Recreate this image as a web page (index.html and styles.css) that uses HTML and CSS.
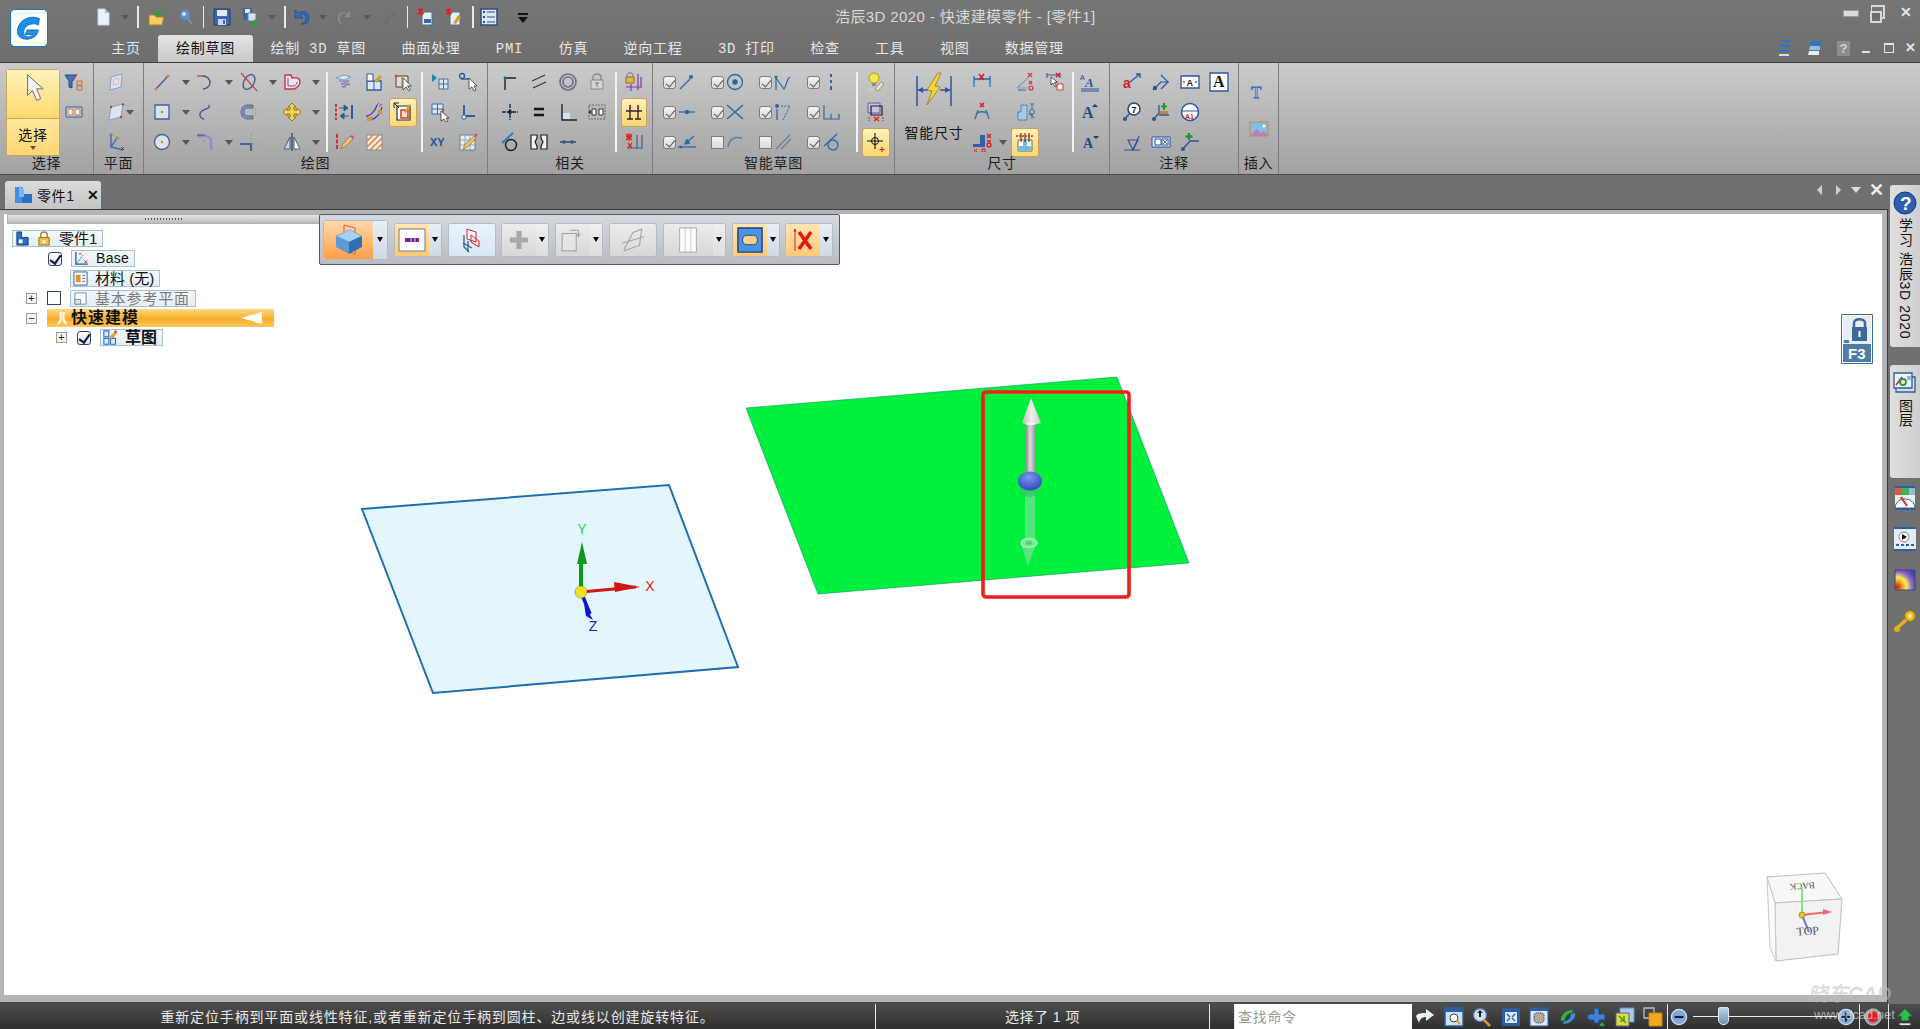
FILE: index.html
```html
<!DOCTYPE html>
<html lang="zh-CN">
<head>
<meta charset="utf-8">
<title>浩辰3D 2020 - 快速建模零件 - [零件1]</title>
<link rel="stylesheet" href="styles.css">
</head>
<body>
<svg class="sprite" xmlns="http://www.w3.org/2000/svg">
  <symbol id="doc" viewBox="0 0 20 20"><path d="M5 2h7l4 4v12H5z" fill="#eaf2fb" stroke="#c7d6e6"/><path d="M12 2v4h4" fill="#9fbcdc"/></symbol>
  <symbol id="open" viewBox="0 0 20 20"><path d="M2 8h6l1 2h8l-2 8H2z" fill="#f1cf62" stroke="#a98422"/><path d="M9 2l6 4-4 4V8H6V5h5z" fill="#2f9e3a"/></symbol>
  <symbol id="find" viewBox="0 0 20 20"><circle cx="10" cy="8" r="5" fill="#5d8fd0"/><circle cx="9" cy="7" r="2" fill="#cfe2f7"/><path d="M13 12l4 5" stroke="#8c8c8c" stroke-width="2"/></symbol>
  <symbol id="save" viewBox="0 0 20 20"><path d="M2 2h16v16H2z" fill="#3f66a8" stroke="#22406f"/><path d="M5 3h10v6H5z" fill="#dfe8f4"/><path d="M6 12h8v6H6z" fill="#c9d6e8"/><path d="M11 13h2v4h-2z" fill="#3f66a8"/></symbol>
  <symbol id="saveall" viewBox="0 0 20 20"><path d="M3 1h9v12H3z" fill="#3f66a8"/><path d="M5 2h5v4H5z" fill="#e3ebf6"/><path d="M8 6h8v8H8z" fill="#d8e2ef" stroke="#6d7f99"/><path d="M9 15h5v-3l5 4-5 4v-3H9z" fill="#2f9e3a"/></symbol>
  <symbol id="undo" viewBox="0 0 20 20"><path d="M4 3v8h8L9 8c3-2 6 0 6 3 0 3-2 5-5 6 5 1 8-2 8-6 0-6-6-8-10-5z" fill="#2f6dc4" stroke="#173f7d" stroke-width=".6"/></symbol>
  <symbol id="redo" viewBox="0 0 20 20"><path d="M16 3v8H8l3-3c-3-2-6 0-6 3 0 3 2 5 5 6-5 1-8-2-8-6 0-6 6-8 10-5z" fill="#8a8a8a" stroke="#636363" stroke-width=".6"/></symbol>
  <symbol id="rep" viewBox="0 0 20 20"><path d="M4 17l4-8 3 3-3 5zM11 9l4-6 2 2-3 7z" fill="#6f6f6f"/></symbol>
  <symbol id="star1" viewBox="0 0 20 20"><path d="M8 5h8v13H6V9z" fill="#e8eff7" stroke="#4b6f9e"/><path d="M8 12h7v4H8z" fill="#3f66a8"/><path d="M2 2l5 5M7 2L2 7M4.500 1v7" stroke="#e21d1d" stroke-width="1.400"/></symbol>
  <symbol id="star2" viewBox="0 0 20 20"><path d="M8 5h8v13H6V9z" fill="#e8eff7" stroke="#4b6f9e"/><path d="M9 16l5-8 3 2-5 7z" fill="#d9a21e"/><path d="M2 2l5 5M7 2L2 7M4.500 1v7" stroke="#e21d1d" stroke-width="1.400"/></symbol>
  <symbol id="list" viewBox="0 0 20 20"><path d="M2 2h16v16H2z" fill="#dce8f4" stroke="#2b517f" stroke-width="1.500"/><path d="M8 5h8M8 10h8M8 15h8" stroke="#2b517f"/><path d="M4 4h2v2H4zM4 9h2v2H4zM4 14h2v2H4z" fill="#2b517f"/></symbol>
  <symbol id="filter" viewBox="0 0 20 20"><path d="M1 3h11L8 9v7l-3-1V9z" fill="#3b78c4" stroke="#214c83"/><path d="M13 2l-4 7" stroke="#d33" stroke-width="1.200"/><path d="M13 9h5v4h-5zM13 14h5v4h-5z" fill="none" stroke="#c66d2a"/></symbol>
  <symbol id="grp" viewBox="0 0 20 20"><path d="M2 5h16v10H2z" fill="#c7d7ea" stroke="#2c5c9b"/><path d="M4 7h5v6H4zM11 7h5v6h-5z" fill="#f6f6f6" stroke="#d76f2e"/></symbol>
  <symbol id="pl1" viewBox="0 0 20 20"><path d="M5 5l11-3-1 13-11 3z" fill="#dbe4f0" stroke="#7ea1cc"/><path d="M8 7l5-1-1 6-5 1z" fill="none" stroke="#d9b8a8"/></symbol>
  <symbol id="pl2" viewBox="0 0 20 20"><path d="M5 5l12-3-2 13-12 3z" fill="#dbe4f0" stroke="#7ea1cc"/><circle cx="5" cy="5" r="1.300" fill="#d33"/><circle cx="17" cy="2.500" r="1.300" fill="#d33"/><circle cx="15" cy="15" r="1.300" fill="#d33"/></symbol>
  <symbol id="pl3" viewBox="0 0 20 20"><path d="M5 2v13l12 3M5 15l6-9" fill="none" stroke="#3f66a8" stroke-width="1.300"/><path d="M10 4l4 3M3 4l2-3 2 3" fill="none" stroke="#b9882e"/><path d="M15 15l3 3M18 15l-3 3" stroke="#444"/></symbol>
  <symbol id="line" viewBox="0 0 20 20"><path d="M4 17L16 4" stroke="#4c5f95" stroke-width="1.400"/><circle cx="4" cy="17" r="1.600" fill="#d58a37"/><circle cx="16" cy="4" r="1.600" fill="#d58a37"/></symbol>
  <symbol id="arc" viewBox="0 0 20 20"><path d="M2 4h6c4 0 7 3 7 6.500S12 17 8 17" fill="none" stroke="#4f4f8f" stroke-width="1.400"/><path d="M2 4h5" stroke="#d58a37" stroke-width="1.400"/></symbol>
  <symbol id="xc" viewBox="0 0 20 20"><ellipse cx="10" cy="10" rx="5" ry="8" transform="rotate(30 10 10)" fill="none" stroke="#4e5f9f" stroke-width="1.500"/><path d="M2 1l16 18" stroke="#db3a3a" stroke-width="1.200"/></symbol>
  <symbol id="heart" viewBox="0 0 20 20"><path d="M3 3h6l1 3c4-1 8 0 8 4 0 3-3 6-6 7H3z" fill="#f6dfe5" stroke="#c9344a" stroke-width="1.400"/><path d="M6 6v8h6c2-1 3-2 3-4" fill="none" stroke="#4e5f9f"/></symbol>
  <symbol id="rect" viewBox="0 0 20 20"><path d="M3 3h14v14H3z" fill="#dbe3ef" stroke="#3f5fa0" stroke-width="1.300"/><circle cx="10" cy="10" r="1.300" fill="#d58a37"/></symbol>
  <symbol id="curve" viewBox="0 0 20 20"><path d="M14 3c2 5-8 3-9 9-.5 3 2 5 4 5" fill="none" stroke="#4f4f8f" stroke-width="1.400"/></symbol>
  <symbol id="cs" viewBox="0 0 20 20"><path d="M14 3H8C5 3 2 6 2 10s3 7 6 7h6v-3H8c-2 0-3-2-3-4s1-4 3-4h6z" fill="#7e8fb8" stroke="#46557f" stroke-width=".7"/><path d="M13 7h4M17 7v6M13 13h4" stroke="#999" stroke-dasharray="1.500 1.500"/></symbol>
  <symbol id="move" viewBox="0 0 20 20"><path d="M10 1l4 4h-2v3h3V6l4 4-4 4v-2h-3v3h2l-4 4-4-4h2v-3H5v2l-4-4 4-4v2h3V5H6z" fill="#f5d33c" stroke="#79622a" stroke-width=".8"/></symbol>
  <symbol id="circ" viewBox="0 0 20 20"><circle cx="10" cy="10" r="7.500" fill="#dbe3ef" stroke="#4c5f95" stroke-width="1.300"/><circle cx="10" cy="10" r="1.300" fill="#d58a37"/></symbol>
  <symbol id="fil" viewBox="0 0 20 20"><path d="M2 4h8c4 0 6 3 6 6v8" fill="none" stroke="#8d8bd6" stroke-width="2.600"/><path d="M2 3h8" stroke="#4f4f8f"/><circle cx="9" cy="9" r="1" fill="#d58a37"/></symbol>
  <symbol id="trim" viewBox="0 0 20 20"><path d="M1 12h11v7" fill="none" stroke="#4f5f9a" stroke-width="2.200"/><path d="M12 2v8M14 12h5" stroke="#9a9a9a" stroke-width="1.500" stroke-dasharray="2 1.500"/></symbol>
  <symbol id="mirror" viewBox="0 0 20 20"><path d="M8 5L2 17h6z" fill="#c6d6ec" stroke="#3f5f9a"/><path d="M12 5l6 12h-6z" fill="#fff" stroke="#3f5f9a"/><path d="M10 1v18" stroke="#222"/></symbol>
  <symbol id="wave" viewBox="0 0 20 20"><path d="M2 6l8-3 7 2-7 3z" fill="#dfe9f3" stroke="#79a2c8"/><path d="M5 9h10l-8 3h9l-8 3h4" fill="none" stroke="#8e6fc0"/></symbol>
  <symbol id="paint" viewBox="0 0 20 20"><path d="M3 9h14v9H3z" fill="#dce9f6" stroke="#2c5c9b" stroke-width="1.300"/><path d="M3 2h6v7H3z" fill="#fff" stroke="#2c5c9b"/><path d="M10 9l6-6 2 2-5 6z" fill="#d89b31"/><path d="M10 9v9" stroke="#2c5c9b"/></symbol>
  <symbol id="cur1" viewBox="0 0 20 20"><path d="M3 4h12v11H3z" fill="#e8d9c8" stroke="#444"/><circle cx="3" cy="4" r="1.200" fill="#d33"/><path d="M9 4v11" stroke="#888"/><path d="M10 6v12l3-3 3 4 1.500-1-3-4h4z" fill="#fff" stroke="#222" stroke-width=".7"/></symbol>
  <symbol id="spl" viewBox="0 0 20 20"><path d="M2 2v16" stroke="#d22" stroke-width="1.800" stroke-dasharray="3 1.500"/><path d="M18 3v14" stroke="#2c5c9b" stroke-width="2"/><path d="M5 6h5M10 3l4 3-4 3zM15 14h-5M10 11l-4 3 4 3z" fill="#2c5c9b" stroke="#2c5c9b"/></symbol>
  <symbol id="offs" viewBox="0 0 20 20"><path d="M2 14c4 0 9-4 11-11M6 18c5-1 10-5 12-13" fill="none" stroke="#3a46b0" stroke-width="1.300"/><path d="M3 15h5v4H3zM14 8h4v4h-4z" fill="#d8932b"/><path d="M13 3l2-2M15 4l3-2" stroke="#d33"/></symbol>
  <symbol id="snap" viewBox="0 0 20 20"><path d="M4 4h13v14H4z" fill="#fff" stroke="#2b2b2b" stroke-width="1.200"/><path d="M8 8h7v8H8z" fill="#f7e5b8" stroke="#c63a3a" stroke-width="1.500"/><path d="M1 1l5 5M6 1H1v5" fill="none" stroke="#222"/><path d="M11 10l5-8 2 1-5 8z" fill="#d99f22"/></symbol>
  <symbol id="pen" viewBox="0 0 20 20"><path d="M3 2v16" stroke="#d22" stroke-width="1.800" stroke-dasharray="4 1.500"/><path d="M7 17l2-5 7-8 3 3-7 7z" fill="#f0c36a" stroke="#8a6c2c" stroke-width=".7"/><path d="M16 4l3 3 1-2-2-2z" fill="#e8438f"/></symbol>
  <symbol id="hatch" viewBox="0 0 20 20"><path d="M3 3h15v15H3z" fill="#f5e8d8" stroke="#8a8a96"/><path d="M3 9l6-6M3 15L15 3M6 18L18 6M12 18l6-6" stroke="#d8773e" stroke-width="1.200"/></symbol>
  <symbol id="tri" viewBox="0 0 20 20"><path d="M2 2l5 4-5 4z" fill="#1e87a8"/><path d="M9 7h9v10H9z" fill="#dbe8f3" stroke="#3d6ea6"/><path d="M13.500 7v10M9 12h9" stroke="#3d6ea6"/></symbol>
  <symbol id="ncur" viewBox="0 0 20 20"><circle cx="4" cy="4" r="2.500" fill="none" stroke="#2c5c9b" stroke-width="1.300"/><path d="M3 7h9" stroke="#2c5c9b" stroke-width="1.500"/><path d="M11 6v11l3-2 2 4 2-1-2-4h3z" fill="#fff" stroke="#222" stroke-width=".7"/></symbol>
  <symbol id="gcur" viewBox="0 0 20 20"><path d="M2 2h11v10H2z" fill="#dbe8f3" stroke="#3d6ea6"/><path d="M7.500 2v10M2 7h11" stroke="#3d6ea6"/><circle cx="13" cy="8" r="1.200" fill="#d33"/><path d="M11 9v10l3-2 2 3 2-1-2-3h3z" fill="#fff" stroke="#222" stroke-width=".7"/></symbol>
  <symbol id="ang" viewBox="0 0 20 20"><path d="M6 3v11h11" fill="none" stroke="#2c5c9b" stroke-width="1.800"/><circle cx="6" cy="15" r="2.200" fill="#dfe9f5" stroke="#2c5c9b"/></symbol>
  <symbol id="tbl" viewBox="0 0 20 20"><path d="M2 3h15v15H2z" fill="#e5eef8" stroke="#667c9c"/><path d="M2 8h15M2 13h15M7 3v15M12 3v15" stroke="#8fa6c3"/><path d="M5 17l2-5 9-8 2 2-8 9z" fill="#e9c060" stroke="#7d6427" stroke-width=".6"/><circle cx="18" cy="3" r="1.500" fill="#e8438f"/></symbol>
  <symbol id="corner" viewBox="0 0 20 20"><path d="M5 18V6h11" fill="none" stroke="#1f1f2b" stroke-width="1.400"/><circle cx="5" cy="6" r="1.400" fill="#2c5c9b"/></symbol>
  <symbol id="par" viewBox="0 0 20 20"><path d="M3 9l13-6M4 16l13-6" stroke="#35353d" stroke-width="1.200"/></symbol>
  <symbol id="conc" viewBox="0 0 20 20"><circle cx="10" cy="10" r="8" fill="none" stroke="#66707e" stroke-width="1.600"/><circle cx="10" cy="10" r="5" fill="none" stroke="#66707e" stroke-width="1.600"/></symbol>
  <symbol id="lock" viewBox="0 0 20 20"><path d="M6 8V5c0-4 8-4 8 0v3" fill="none" stroke="#8a8a8a" stroke-width="1.300"/><path d="M4 8h12v9H4z" fill="#d4d4d4" stroke="#8a8a8a"/><path d="M8 11h4M10 11v4" stroke="#777"/></symbol>
  <symbol id="lk2" viewBox="0 0 20 20"><path d="M3 5V3c0-3 6-3 6 0v2" fill="none" stroke="#7a7a7a"/><path d="M2 5h8v6H2z" fill="#e0b83b" stroke="#8a6c2c"/><path d="M14 2v16M2 15h16M17 5v10M7 12v7" stroke="#7d3ca5" stroke-width="1.200"/></symbol>
  <symbol id="cross" viewBox="0 0 20 20"><path d="M10 2v16M2 10h16" stroke="#14233e" stroke-width="1.300" stroke-dasharray="4 1"/><circle cx="10" cy="10" r="2" fill="#14233e"/></symbol>
  <symbol id="eq" viewBox="0 0 20 20"><path d="M5 7h10M5 13h10" stroke="#15151a" stroke-width="2.300"/></symbol>
  <symbol id="perp" viewBox="0 0 20 20"><path d="M4 2v16h15" fill="none" stroke="#22222a" stroke-width="1.400"/><path d="M5 11h7v6H5z" fill="#cfe4f5"/></symbol>
  <symbol id="grpb" viewBox="0 0 20 20"><path d="M2 3h16v14H2z" fill="#b8b8b8" stroke="#666" stroke-dasharray="2 1"/><path d="M5 7h4v6H5zM12 7h4v6h-4z" fill="#fff" stroke="#333"/><circle cx="3" cy="10" r="1.500" fill="#333"/></symbol>
  <symbol id="tan" viewBox="0 0 20 20"><circle cx="11" cy="13" r="5.500" fill="none" stroke="#1c1c22" stroke-width="1.400"/><path d="M2 11L13 1" stroke="#2c76c7" stroke-width="1.700"/></symbol>
  <symbol id="sym" viewBox="0 0 20 20"><path d="M2 3h6v3L6 10l2 4v3H2zM18 3h-6v3l2 4-2 4v3h6z" fill="#f2f2f2" stroke="#1f1f2b" stroke-width="1.200"/></symbol>
  <symbol id="dist" viewBox="0 0 20 20"><path d="M2 10h16" stroke="#1f2b4d" stroke-width="1.200"/><circle cx="6" cy="10" r="1.800" fill="#2c5c9b"/><circle cx="14" cy="10" r="1.800" fill="#2c5c9b"/></symbol>
  <symbol id="vv" viewBox="0 0 20 20"><path d="M6 3v14M14 3v14M2 9h8M10 9h8M3 17h6M11 17h6" stroke="#30253a" stroke-width="1.400"/><path d="M6 3v4M14 3v4" stroke="#d22" stroke-width="1.600"/></symbol>
  <symbol id="vv3" viewBox="0 0 20 20"><path d="M2 2l6 6M8 2l-6 6M2 4.500h6M5 1v8" stroke="#e21d1d" stroke-width="1.300"/><path d="M13 3v14M18 3v14M3 16h15" stroke="#3b5fa0" stroke-width="1.200"/><path d="M4 11l4 5M8 11l-4 5" stroke="#d22" stroke-width="1.300"/></symbol>
  <symbol id="l1" viewBox="0 0 20 20"><path d="M3 17L13 7" stroke="#2b67a8" stroke-width="1.300"/><circle cx="14" cy="5" r="2" fill="#2b67a8"/></symbol>
  <symbol id="l2" viewBox="0 0 20 20"><circle cx="10" cy="10" r="7.500" fill="none" stroke="#2b67a8" stroke-width="1.300"/><circle cx="10" cy="10" r="2.700" fill="#2b67a8"/></symbol>
  <symbol id="l3" viewBox="0 0 20 20"><path d="M3 18V6l8 11c4-6 2-10 6-12" fill="none" stroke="#2b67a8" stroke-width="1.200"/><circle cx="3" cy="5" r="1.500" fill="#2b67a8"/></symbol>
  <symbol id="l4" viewBox="0 0 20 20"><path d="M10 2v3M10 8v3M10 14v4" stroke="#2b67a8" stroke-width="2"/></symbol>
  <symbol id="l5" viewBox="0 0 20 20"><path d="M2 10h16" stroke="#2b67a8" stroke-width="1.300"/><circle cx="10" cy="10" r="2.200" fill="#2b67a8"/></symbol>
  <symbol id="l6" viewBox="0 0 20 20"><path d="M2 3l16 14M18 3L2 17" stroke="#2b67a8" stroke-width="1.500"/></symbol>
  <symbol id="l7" viewBox="0 0 20 20"><path d="M4 18V7" stroke="#2b67a8" stroke-width="1.300"/><circle cx="4" cy="4" r="2" fill="#2b67a8"/><path d="M8 4h9l-7 14" fill="none" stroke="#2b67a8" stroke-dasharray="2 1.300"/></symbol>
  <symbol id="l8" viewBox="0 0 20 20"><path d="M3 3v14h15v-5M10 17v-5" fill="none" stroke="#2b67a8" stroke-width="1.200"/></symbol>
  <symbol id="l9" viewBox="0 0 20 20"><path d="M1 15h18" stroke="#2b67a8" stroke-width="1.300"/><path d="M17 4l-9 8M13 11l-5 1 2-5" fill="#2b67a8" stroke="#2b67a8" stroke-width="1.300"/><circle cx="4" cy="15" r="1.500" fill="#2b67a8"/></symbol>
  <symbol id="l10" viewBox="0 0 20 20"><path d="M3 15c1-8 7-11 14-9" fill="none" stroke="#5a7fa8" stroke-width="1.500"/></symbol>
  <symbol id="l11" viewBox="0 0 20 20"><path d="M3 17L17 3M8 17L18 7" stroke="#6f7f92" stroke-width="1.200"/></symbol>
  <symbol id="l12" viewBox="0 0 20 20"><circle cx="12" cy="13" r="5" fill="none" stroke="#2b67a8" stroke-width="1.300"/><path d="M3 14L16 2" stroke="#2b67a8" stroke-width="1.300"/></symbol>
  <symbol id="bulb" viewBox="0 0 20 20"><circle cx="8" cy="6" r="5" fill="#f4e842" stroke="#b59e20"/><path d="M6 11h4v3H6z" fill="#8c8c8c"/><path d="M9 17l6-7 3 2-6 7z" fill="#e9e2c0" stroke="#777" stroke-width=".7"/><path d="M2 16h6v3H2z" fill="#c8c8c8"/></symbol>
  <symbol id="rbox" viewBox="0 0 20 20"><path d="M2 1h12v10H2z" fill="#c9c3df" stroke="#6a4fae"/><path d="M5 4h11v9H5z" fill="none" stroke="#222" stroke-width="1.200"/><path d="M8 15l5 4M13 15l-5 4" stroke="#d22" stroke-width="1.500"/><path d="M3 15v4M17 15v4" stroke="#d22" stroke-dasharray="2 1"/></symbol>
  <symbol id="tgt" viewBox="0 0 20 20"><circle cx="9" cy="9" r="3.500" fill="none" stroke="#111"/><path d="M9 1v16M1 9h16" stroke="#111" stroke-width="1.100"/><path d="M16 15v5M13.500 17.500h5" stroke="#d22" stroke-width="1.200"/></symbol>
  <symbol id="smart" viewBox="0 0 40 36"><path d="M3 4v30M37 4v30M4 18h10M26 18h10" stroke="#2b5799" stroke-width="1.500"/><path d="M4 18l5-3v6zM36 18l-5-3v6z" fill="#2b5799"/><path d="M24 1L13 18l5 1-5 14 13-18-5-1 6-13z" fill="#f3d53d" stroke="#a68b1b"/></symbol>
  <symbol id="d1" viewBox="0 0 20 20"><path d="M2 4v11M18 4v11M2 7h16" stroke="#2b67a8" stroke-width="1.300"/><path d="M7 2l5 6M12 2L7 8" stroke="#e01c1c" stroke-width="1.700"/><path d="M2 12v3M18 12v3" stroke="#38a3e0" stroke-width="2"/></symbol>
  <symbol id="d2" viewBox="0 0 20 20"><path d="M2 16L14 5M2 16h10" stroke="#a08ec0" stroke-width="1.100"/><path d="M13 1l4 4M17 1l-4 4M14 9l3 3M17 9l-3 3" stroke="#d33" stroke-width="1.100"/><circle cx="16" cy="16" r="2" fill="none" stroke="#d33" stroke-width="1.200"/><path d="M3 18h8" stroke="#2b67a8"/></symbol>
  <symbol id="d3" viewBox="0 0 20 20"><path d="M2 3h13M2 1v5M15 1v5" stroke="#2c5c9b"/><path d="M6 5v8l2-2 2 4 1.500-.7-2-4h3z" fill="#fff" stroke="#222" stroke-width=".7"/><path d="M11 1l4 4M15 1l-4 4" stroke="#e01c1c" stroke-width="1.500"/><path d="M12 12h6v6h-6z" fill="#fff" stroke="#d33"/></symbol>
  <symbol id="d4" viewBox="0 0 20 20"><path d="M8 1l4 4M12 1L8 5" stroke="#e01c1c" stroke-width="1.600"/><path d="M3 17L6 8M17 17l-3-9M4 12c3-3 9-3 12 0" fill="none" stroke="#3c6ea8" stroke-width="1.300"/></symbol>
  <symbol id="d5" viewBox="0 0 20 20"><path d="M3 10h3V3h6v15H3z" fill="#a7c8e8" stroke="#3c6ea8" stroke-dasharray="2 .7"/><path d="M15 2h4M17 2v5M17 11v6M14 12l6 4" stroke="#3c6ea8"/><circle cx="17" cy="10" r="2.500" fill="none" stroke="#3c6ea8"/></symbol>
  <symbol id="d6" viewBox="0 0 20 20"><path d="M8 3v9H1v3h12V3z" fill="#2f62a8"/><path d="M15 2l4 4M19 2l-4 4M15 9h4" stroke="#e01c1c" stroke-width="1.500"/><circle cx="17" cy="13" r="2" fill="none" stroke="#e01c1c" stroke-width="1.300"/><path d="M2 17l3 3M5 17l-3 3M10 17h3v3h-3z" stroke="#e01c1c" fill="none"/></symbol>
  <symbol id="d7" viewBox="0 0 20 20"><path d="M3 8h14v11H3z" fill="#fff" stroke="#7f6a35"/><path d="M3 14h5V9h4v5h5v5H3z" fill="#74bde8"/><path d="M6 1v9M14 1v9M10 1v9" stroke="#222"/><path d="M1 4h18" stroke="#d22" stroke-dasharray="2 1" stroke-width="1.500"/></symbol>
  <symbol id="n2" viewBox="0 0 20 20"><path d="M2 18l8-8M18 10H9M10 3l7 7-7 7" fill="none" stroke="#2b5799" stroke-width="1.200"/><circle cx="4" cy="16" r="2.200" fill="#2b5799"/></symbol>
  <symbol id="n6" viewBox="0 0 20 20"><path d="M2 18l6-7V3M8 13h10" fill="none" stroke="#2b5799" stroke-width="1.300"/><circle cx="3" cy="17" r="2" fill="#2b5799"/><path d="M9 9h8v3H9z" fill="#b58a3a"/><path d="M13 1v7M10 4.500h6" stroke="#1c9a2c" stroke-width="2"/></symbol>
  <symbol id="n8" viewBox="0 0 20 20"><path d="M2 18h16M6 8h10l-5 10z" fill="none" stroke="#2b5799" stroke-width="1.200"/><path d="M11 18L17 4" stroke="#2b5799" stroke-width="1.200"/></symbol>
  <symbol id="n9" viewBox="0 0 20 20"><path d="M1 5h18v10H1z" fill="#e1ebf6" stroke="#2b5799"/><path d="M4 7h6v6H4zM11 7h6v6h-6z" fill="#fff" stroke="#2b5799"/><path d="M12 8l4 4M16 8l-4 4" stroke="#2b5799"/></symbol>
  <symbol id="n10" viewBox="0 0 20 20"><path d="M2 18l8-9h9" fill="none" stroke="#2b5799" stroke-width="1.300"/><circle cx="3" cy="17" r="2" fill="#2b5799"/><path d="M9 1v7M5.500 4.500h7" stroke="#1c9a2c" stroke-width="2.300"/></symbol>
  <symbol id="pic" viewBox="0 0 20 20"><path d="M1 3h18v14H1z" fill="#7ebfe8" stroke="#d18a3a" stroke-width="1.200"/><path d="M1 17l7-7 4 4 3-2 4 5z" fill="#c47ab8"/><circle cx="15" cy="7" r="1.500" fill="#fff"/></symbol>
  <symbol id="next" viewBox="0 0 20 20"><path d="M1 9c2-3 6-3 10-3V2l8 6-8 6v-4c-3 0-6 1-7 6z" fill="#eaf3fb"/></symbol>
  <symbol id="s1" viewBox="0 0 20 20"><path d="M1 1h18v18H1z" fill="#cfe2f5" stroke="#2b5f9e" stroke-width="1.500"/><path d="M1 1h18v4H1z" fill="#2b5f9e"/><circle cx="10" cy="11" r="4" fill="#fff" stroke="#444"/><path d="M13 14l3 3" stroke="#d89b31" stroke-width="2"/></symbol>
  <symbol id="s2" viewBox="0 0 20 20"><circle cx="8" cy="8" r="6.500" fill="#cfe2f5" stroke="#5c7b9e" stroke-width="1.300"/><path d="M8 3l3 3H9v4H7V6H5zM4 11h8" fill="#222"/><path d="M12 13l6 6" stroke="#d89b31" stroke-width="2.500"/></symbol>
  <symbol id="s3" viewBox="0 0 20 20"><path d="M1 1h18v18H1z" fill="#2b5f9e"/><path d="M4 5h12v11H4z" fill="#d9e8f6"/><path d="M6 7l3 3M14 7l-3 3M6 14l3-3M14 14l-3-3" stroke="#2b5f9e" stroke-width="1.400"/></symbol>
  <symbol id="s4" viewBox="0 0 20 20"><path d="M1 1h18v18H1z" fill="#d9e8f6" stroke="#2b5f9e"/><path d="M1 1h18v3H1z" fill="#2b5f9e"/><path d="M5 8c0-3 10-3 10 0v5c0 4-10 4-10 0z" fill="#b5a99a" stroke="#4a4a4a" stroke-dasharray="1.500 .8"/></symbol>
  <symbol id="s5" viewBox="0 0 20 20"><path d="M3 14C2 8 8 3 15 3l-1 3c-4 0-7 3-7 7z" fill="#2bb34a"/><path d="M17 6c1 6-5 11-12 11l1-3c4 0 7-3 7-7z" fill="#3b8ed8"/></symbol>
  <symbol id="s6" viewBox="0 0 20 20"><path d="M8 1h5v6h6v6h-6v3H8v-3H3L1 10l2-3h5z" fill="#3f82cf" stroke="#1d4a87"/><path d="M13 19l3-4 3 4z" fill="#2bb34a"/></symbol>
  <symbol id="s7" viewBox="0 0 20 20"><path d="M5 1h14v14H5z" fill="#a8cbec" stroke="#6a8fb8"/><path d="M1 6h13v13H1z" fill="#f2d431" stroke="#3f6ca8"/><path d="M4 9l7 7M9 9v5H5" stroke="#2ca33f" stroke-width="1.600" fill="none"/></symbol>
  <symbol id="s8" viewBox="0 0 20 20"><path d="M1 1h10v10H1z" fill="none" stroke="#bfbfbf" stroke-width="1.300"/><path d="M6 6h13v13H6z" fill="#f2a81c" stroke="#c4830a"/></symbol>
  <symbol id="zm" viewBox="0 0 20 20"><circle cx="10" cy="10" r="8.500" fill="#7fa9d9" stroke="#d5e4f4" stroke-width="1.300"/><path d="M5 10h10" stroke="#222" stroke-width="2.400"/></symbol>
  <symbol id="zp" viewBox="0 0 20 20"><circle cx="10" cy="10" r="8.500" fill="#7fa9d9" stroke="#d5e4f4" stroke-width="1.300"/><path d="M5 10h10M10 5v10" stroke="#222" stroke-width="2.400"/></symbol>
  <symbol id="rec" viewBox="0 0 20 20"><circle cx="10" cy="10" r="9" fill="#9a9a9a" stroke="#cfcfcf"/><circle cx="10" cy="10" r="6" fill="#e11d2a"/></symbol>
  <symbol id="upg" viewBox="0 0 20 20"><path d="M10 1l8 8h-4v5H6V9H2z" fill="#2fc04a" stroke="#188a2e"/><path d="M4 17h12v2H4z" fill="#e6e6e6"/></symbol>
  <symbol id="layers" viewBox="0 0 24 24"><path d="M3 6h19v15H3z" fill="#cfe0f2" stroke="#2b5f9e" stroke-width="1.300"/><path d="M1 2h18v15H1z" fill="#eef3f8" stroke="#2b5f9e" stroke-width="1.300"/><path d="M3 14L9 6" stroke="#d22" stroke-width="1.500"/><circle cx="10" cy="11" r="3" fill="none" stroke="#2c9a3c" stroke-width="1.800"/><path d="M14 5h4v4h-4z" fill="#8fc0ec"/></symbol>
  <symbol id="gauge" viewBox="0 0 24 24"><path d="M2 1h20v22H2z" fill="#e8efe8"/><path d="M2 1h6v8H2z" fill="#e2583a"/><path d="M8 1h8v8H8z" fill="#3fb35c"/><path d="M16 1h6v8h-6z" fill="#9bb7d8"/><path d="M2 22C3 10 21 10 22 22z" fill="#fff" stroke="#2b5f9e"/><path d="M8 11l6 9" stroke="#d22" stroke-width="2"/><path d="M2 1h20M2 23h20" stroke="#2b5f9e" stroke-width="2"/></symbol>
  <symbol id="video" viewBox="0 0 24 24"><path d="M1 1h22v22H1z" fill="#e3edf7"/><path d="M1 1h22M1 23h22" stroke="#2b5f9e" stroke-width="2"/><circle cx="11" cy="10" r="5" fill="#fff" stroke="#888"/><path d="M9 7l5 3-5 3z" fill="#111"/><path d="M3 18h18" stroke="#2b5f9e" stroke-width="2" stroke-dasharray="3 2"/></symbol>
  <symbol id="heat" viewBox="0 0 24 24"><defs><radialGradient id="hg" cx="10%" cy="85%" r="110%"><stop offset="0" stop-color="#d60f0f"/><stop offset=".25" stop-color="#f0a020"/><stop offset=".45" stop-color="#f5ee5a"/><stop offset=".7" stop-color="#8862c4"/><stop offset="1" stop-color="#3b3fa5"/></radialGradient></defs><path d="M2 2h20v20H2z" fill="url(#hg)" stroke="#2b4a86"/></symbol>
  <symbol id="key" viewBox="0 0 24 24"><circle cx="17" cy="7" r="5" fill="#f2c21c" stroke="#b88a10"/><circle cx="17" cy="7" r="2" fill="#fff3b0"/><path d="M13 11L4 19" stroke="#e5b116" stroke-width="3.600"/><circle cx="4" cy="20" r="3" fill="#e5b116"/></symbol>
  <symbol id="part" viewBox="0 0 22 22"><path d="M2 3h8v16H2z" fill="#3f90e0"/><path d="M9 10h10v9H9z" fill="#2a70c4"/><path d="M6 1l5 5v7H6z" fill="#7ab8f0"/></symbol>
  <symbol id="tr1" viewBox="0 0 16 16"><path d="M2 1h5v6h7v8H2z" fill="#2b6fc4" stroke="#123f7d"/><path d="M4 9h4v4H4z" fill="#fff"/></symbol>
  <symbol id="tr2" viewBox="0 0 16 16"><path d="M4 7V4c0-4 7-4 7 0v3" fill="none" stroke="#a8813a" stroke-width="1.500"/><path d="M2 7h11v8H2z" fill="#f4c23d" stroke="#8c6a1f"/><path d="M6 10h3v3H6z" fill="#fff"/></symbol>
  <symbol id="tr3" viewBox="0 0 16 16"><path d="M2 1v13h13" fill="none" stroke="#2d5f9c" stroke-width="1.400"/><path d="M3 13l7-9" stroke="#2d5f9c" stroke-dasharray="2 1"/><path d="M11 10l3 3M14 10l-3 3" stroke="#d22"/><path d="M5 3h3" stroke="#d22"/></symbol>
  <symbol id="tr4" viewBox="0 0 16 16"><path d="M1 1h14v14H1z" fill="#fff" stroke="#2b5f9e"/><path d="M3 4h5v8H3z" fill="#e3922e"/><path d="M10 5h3M10 8h3M10 11h3" stroke="#2b5f9e"/></symbol>
  <symbol id="tr5" viewBox="0 0 16 16"><path d="M2 2h12v12H2z" fill="#fff" stroke="#6f89a8"/><path d="M2 9h6v5H2z" fill="#dde8f3" stroke="#6f89a8"/></symbol>
  <symbol id="tr6" viewBox="0 0 18 18"><path d="M1 1h6v7H1zM1 10h6v7H1zM9 10h6v7H9z" fill="#dbe9f7" stroke="#2b6fc4" stroke-width="1.300"/><path d="M8 9l7-8 2 2-7 8z" fill="#e6b33a" stroke="#8c6a1f" stroke-width=".6"/><circle cx="15" cy="2" r="1.300" fill="#d22"/></symbol>
  <symbol id="qs" viewBox="0 0 16 16"><path d="M5 1v9l-3 4M8 1v9l3 4" fill="none" stroke="#fff" stroke-width="2.200"/></symbol>
  <symbol id="t1" viewBox="0 0 36 32"><path d="M13 1l11 3v26l-11-5z" fill="#f8d0a5" stroke="#e2593c"/><path d="M5 12l14-6 12 6-13 6z" fill="#a8d0f0" stroke="#5a8fc0" stroke-width=".6"/><path d="M5 12l13 6v12L5 23z" fill="#5e9bd6"/><path d="M18 18l13-6v11l-13 7z" fill="#2f6eb4"/></symbol>
  <symbol id="t2" viewBox="0 0 28 24"><path d="M1 1h26v22H1z" fill="#fff" stroke="#777"/><path d="M7 10h14v4H7z" fill="#6b1f9e"/><path d="M13 10v4M17 10v4" stroke="#ffc8ff"/></symbol>
  <symbol id="t3" viewBox="0 0 24 26"><path d="M7 2l9 3v10l-9-3z" fill="#eef5fb" stroke="#d22"/><path d="M4 8v12l5 5" fill="none" stroke="#2b5f9e" stroke-width="1.300"/><path d="M11 8l8 6v6l-8-5z" fill="none" stroke="#d22"/><path d="M3 16l9 5M8 14v11" stroke="#2b5f9e" stroke-width="1.300"/></symbol>
  <symbol id="t4" viewBox="0 0 20 20"><path d="M8 3h4v5h5v4h-5v5H8v-5H3V8h5z" fill="#a8a8a8"/></symbol>
  <symbol id="t5" viewBox="0 0 24 24"><path d="M2 6h13v16H2z" fill="#e5e5e5" stroke="#a5a5a5"/><path d="M9 3h8M17 3v6M15 6l2 3 2-3" fill="none" stroke="#a5a5a5"/></symbol>
  <symbol id="t6" viewBox="0 0 24 24"><path d="M2 15l20-6M4 20l8-15 8-3-2 15-14 5z" fill="none" stroke="#a5a5a5"/></symbol>
  <symbol id="t7" viewBox="0 0 24 28"><path d="M3 1h18v26H3z" fill="#fff" stroke="#a5a5a5"/><path d="M9 1v26M15 1v26" stroke="#c5c5c5"/></symbol>
  <symbol id="t8" viewBox="0 0 28 28"><path d="M1 1h26v26H1z" fill="#4b93e2" stroke="#1d3f78" stroke-width="1.500"/><rect x="6" y="9" width="16" height="10" rx="4" fill="#f7cf8f" stroke="#1d3f78"/></symbol>
  <symbol id="t9" viewBox="0 0 20 26"><path d="M2 2v22" stroke="#d22"/><path d="M1 5l1-3 1 3" fill="none" stroke="#d22"/><path d="M6 5l12 17M18 5L6 22" stroke="#e01818" stroke-width="3.600"/></symbol>
</svg>

<header class="head">
  <div class="logo">
    <svg viewBox="0 0 38 38" class="logo-svg"><path d="M30 9C20 5 9 10 7 20c-2 8 6 13 14 10 4-1 7-4 8-9H17l-2 5h8c-2 3-7 3-9 0-2-4 1-10 7-11 4-1 7 0 8 1z" fill="#1e8fe6" stroke="#0d5fb0" stroke-width=".8"/></svg>
  </div>
  <div class="title-row">
    <div class="qat">
      <svg class="i"><use href="#doc"/></svg><b class="arr dim"></b><i class="vsep"></i>
      <svg class="i"><use href="#open"/></svg><svg class="i"><use href="#find"/></svg><i class="vsep"></i>
      <svg class="i"><use href="#save"/></svg><svg class="i"><use href="#saveall"/></svg><b class="arr dim"></b><i class="vsep"></i>
      <svg class="i tight"><use href="#undo"/></svg><b class="arr dim"></b>
      <svg class="i"><use href="#redo"/></svg><b class="arr dim"></b>
      <svg class="i"><use href="#rep"/></svg><i class="vsep"></i>
      <svg class="i"><use href="#star1"/></svg><svg class="i"><use href="#star2"/></svg><i class="vsep"></i>
      <svg class="i tight"><use href="#list"/></svg>
      <span class="qat-more"></span>
    </div>
    <div class="title">浩辰3D 2020 - 快速建模零件 - [零件1]</div>
    <div class="win">
      <i class="w-min"></i><i class="w-res"></i><i class="w-x">✕</i>
    </div>
  </div>
  <div class="tab-row">
    <nav class="tabs">
      <span class="tab">主页</span>
      <span class="tab active">绘制草图</span>
      <span class="tab">绘制 3D 草图</span>
      <span class="tab">曲面处理</span>
      <span class="tab">PMI</span>
      <span class="tab">仿真</span>
      <span class="tab">逆向工程</span>
      <span class="tab">3D 打印</span>
      <span class="tab">检查</span>
      <span class="tab">工具</span>
      <span class="tab">视图</span>
      <span class="tab">数据管理</span>
    </nav>
    <div class="sub-win">
      <svg class="hs" viewBox="0 0 14 16"><path d="M4 1h10M3 6h10M2 11h10" stroke="#2b73cc" stroke-width="2"/><path d="M2 15h10" stroke="#fff" stroke-width="1.500"/></svg>
      <svg class="hs" viewBox="0 0 14 16"><path d="M4 1h10v4H3z" fill="#2b73cc"/><path d="M3 6h10v4H2z" fill="#8fc0ec"/><path d="M2 11h10v4H1z" fill="#e3f0fb"/></svg>
      <span class="q-help">?</span>
      <i class="sw-min"></i><i class="sw-res"></i><i class="sw-x">✕</i>
    </div>
  </div>
</header>

<section class="ribbon">
  <div class="grp g-sel">
    <div class="cells">
      <div class="bigsel">
        <div class="bigsel-top">
          <svg class="cursor" viewBox="0 0 24 34"><path d="M3 1v25l6-6 5 12 5-2-5-12h8z" fill="#f4f4f4" stroke="#6f6f6f" stroke-width="1.200"/></svg>
        </div>
        <div class="bigsel-bot"><span>选择</span><b class="arr"></b></div>
      </div>
      <div class="c"><svg class="i"><use href="#filter"/></svg></div>
      <div class="c"><svg class="i"><use href="#grp"/></svg></div>
      <div class="c"></div>
    </div>
    <div class="lab">选择</div>
  </div>
  <div class="grp g-pla">
    <div class="cells">
      <div class="c l"><svg class="i"><use href="#pl1"/></svg></div>
      <div class="c l"><svg class="i"><use href="#pl2"/></svg><b class="arr"></b></div>
      <div class="c l"><svg class="i"><use href="#pl3"/></svg></div>
    </div>
    <div class="lab">平面</div>
  </div>
  <div class="grp g-drw">
    <div class="cells">
      <div class="c l"><svg class="i"><use href="#line"/></svg><b class="arr"></b></div>
      <div class="c l"><svg class="i"><use href="#rect"/></svg><b class="arr"></b></div>
      <div class="c l"><svg class="i"><use href="#circ"/></svg><b class="arr"></b></div>
      <div class="c l"><svg class="i"><use href="#arc"/></svg><b class="arr"></b></div>
      <div class="c l"><svg class="i"><use href="#curve"/></svg></div>
      <div class="c l"><svg class="i"><use href="#fil"/></svg><b class="arr"></b></div>
      <div class="c l"><svg class="i"><use href="#xc"/></svg><b class="arr"></b></div>
      <div class="c l"><svg class="i"><use href="#cs"/></svg></div>
      <div class="c l"><svg class="i"><use href="#trim"/></svg></div>
      <div class="c l"><svg class="i"><use href="#heart"/></svg><b class="arr"></b></div>
      <div class="c l"><svg class="i"><use href="#move"/></svg><b class="arr"></b></div>
      <div class="c l"><svg class="i"><use href="#mirror"/></svg><b class="arr"></b></div>
      <i class="isep"></i>
      <div class="c"><svg class="i"><use href="#wave"/></svg></div>
      <div class="c"><svg class="i"><use href="#spl"/></svg></div>
      <div class="c"><svg class="i"><use href="#pen"/></svg></div>
      <div class="c"><svg class="i"><use href="#paint"/></svg></div>
      <div class="c"><svg class="i"><use href="#offs"/></svg></div>
      <div class="c"><svg class="i"><use href="#hatch"/></svg></div>
      <div class="c"><svg class="i"><use href="#cur1"/></svg></div>
      <div class="c"><span class="on"><svg class="i"><use href="#snap"/></svg></span></div>
      <div class="c"></div>
      <i class="isep"></i>
      <div class="c"><svg class="i"><use href="#tri"/></svg></div>
      <div class="c"><svg class="i"><use href="#gcur"/></svg></div>
      <div class="c"><svg class="i" viewBox="0 0 20 20"><text x="0" y="14" class="svgxy">XY</text></svg></div>
      <div class="c"><svg class="i"><use href="#ncur"/></svg></div>
      <div class="c"><svg class="i"><use href="#ang"/></svg></div>
      <div class="c"><svg class="i"><use href="#tbl"/></svg></div>
    </div>
    <div class="lab">绘图</div>
  </div>
  <div class="grp g-rel">
    <div class="cells">
      <div class="c"><svg class="i"><use href="#corner"/></svg></div>
      <div class="c"><svg class="i"><use href="#cross"/></svg></div>
      <div class="c"><svg class="i"><use href="#tan"/></svg></div>
      <div class="c"><svg class="i"><use href="#par"/></svg></div>
      <div class="c"><svg class="i"><use href="#eq"/></svg></div>
      <div class="c"><svg class="i"><use href="#sym"/></svg></div>
      <div class="c"><svg class="i"><use href="#conc"/></svg></div>
      <div class="c"><svg class="i"><use href="#perp"/></svg></div>
      <div class="c"><svg class="i"><use href="#dist"/></svg></div>
      <div class="c"><svg class="i"><use href="#lock"/></svg></div>
      <div class="c"><svg class="i"><use href="#grpb"/></svg></div>
      <div class="c"></div>
      <i class="isep"></i>
      <div class="c"><svg class="i"><use href="#lk2"/></svg></div>
      <div class="c"><span class="on"><svg class="i"><use href="#vv"/></svg></span></div>
      <div class="c"><svg class="i"><use href="#vv3"/></svg></div>
    </div>
    <div class="lab">相关</div>
  </div>
  <div class="grp g-sma">
    <div class="cells">
      <div class="c l"><i class="chk on"></i><svg class="i"><use href="#l1"/></svg></div>
      <div class="c l"><i class="chk on"></i><svg class="i"><use href="#l5"/></svg></div>
      <div class="c l"><i class="chk on"></i><svg class="i"><use href="#l9"/></svg></div>
      <div class="c l"><i class="chk on"></i><svg class="i"><use href="#l2"/></svg></div>
      <div class="c l"><i class="chk on"></i><svg class="i"><use href="#l6"/></svg></div>
      <div class="c l"><i class="chk"></i><svg class="i"><use href="#l10"/></svg></div>
      <div class="c l"><i class="chk on"></i><svg class="i"><use href="#l3"/></svg></div>
      <div class="c l"><i class="chk on"></i><svg class="i"><use href="#l7"/></svg></div>
      <div class="c l"><i class="chk"></i><svg class="i"><use href="#l11"/></svg></div>
      <div class="c l"><i class="chk on"></i><svg class="i"><use href="#l4"/></svg></div>
      <div class="c l"><i class="chk on"></i><svg class="i"><use href="#l8"/></svg></div>
      <div class="c l"><i class="chk on"></i><svg class="i"><use href="#l12"/></svg></div>
      <i class="isep"></i>
      <div class="c"><svg class="i"><use href="#bulb"/></svg></div>
      <div class="c"><svg class="i"><use href="#rbox"/></svg></div>
      <div class="c"><span class="on"><svg class="i"><use href="#tgt"/></svg></span></div>
    </div>
    <div class="lab">智能草图</div>
  </div>
  <div class="grp g-dim">
    <div class="cells">
      <div class="bigdim"><svg class="smart"><use href="#smart"/></svg><span>智能尺寸</span></div>
      <div class="c l"><svg class="i"><use href="#d1"/></svg></div>
      <div class="c l"><svg class="i"><use href="#d4"/></svg></div>
      <div class="c l"><svg class="i"><use href="#d6"/></svg><b class="arr"></b></div>
      <div class="c"><svg class="i"><use href="#d2"/></svg></div>
      <div class="c"><svg class="i"><use href="#d5"/></svg></div>
      <div class="c"><span class="on"><svg class="i"><use href="#d7"/></svg></span></div>
      <div class="c"><svg class="i"><use href="#d3"/></svg></div>
      <div class="c"></div>
      <div class="c"></div>
      <i class="isep"></i>
      <div class="c"><svg class="i" viewBox="0 0 20 20"><text x="0" y="8" class="svgs">A</text><text x="5" y="15" class="svgb">A</text><path d="M1 17h18M1 19h18" stroke="#2b5799"/></svg></div>
      <div class="c"><svg class="i" viewBox="0 0 20 20"><text x="2" y="16" class="svgB">A</text><path d="M15 2l3 3h-6z" fill="#1f3d70"/></svg></div>
      <div class="c"><svg class="i" viewBox="0 0 20 20"><text x="3" y="16" class="svgm">A</text><path d="M13 4l3 3 3-3z" fill="#1f3d70"/></svg></div>
    </div>
    <div class="lab">尺寸</div>
  </div>
  <div class="grp g-not">
    <div class="cells">
      <div class="c"><svg class="i" viewBox="0 0 20 20"><path d="M8 10L18 2M14 2h4v4" fill="none" stroke="#2b5799" stroke-width="1.300"/><text x="1" y="16" class="svgr">a</text></svg></div>
      <div class="c"><svg class="i" viewBox="0 0 20 20"><path d="M2 18l6-7" stroke="#2b5799" stroke-width="1.400"/><circle cx="3" cy="17" r="2" fill="#2b5799"/><circle cx="12" cy="7" r="6" fill="#fff" stroke="#24466f" stroke-width="1.500"/><text x="9.500" y="10.500" class="svgt">7</text></svg></div>
      <div class="c"><svg class="i"><use href="#n8"/></svg></div>
      <div class="c"><svg class="i"><use href="#n2"/></svg></div>
      <div class="c"><svg class="i"><use href="#n6"/></svg></div>
      <div class="c"><svg class="i"><use href="#n9"/></svg></div>
      <div class="c"><svg class="i" viewBox="0 0 20 20"><path d="M1 4h18v12H1z" fill="#fff" stroke="#2b5799" stroke-width="1.300"/><path d="M3 10h2M15 10h2" stroke="#222"/><text x="6.500" y="13.500" class="svgt">A</text></svg></div>
      <div class="c"><svg class="i" viewBox="0 0 20 20"><circle cx="10" cy="10" r="8.500" fill="#fff" stroke="#2b5799" stroke-width="1.500"/><path d="M2 9h16" stroke="#2b5799"/><text x="5" y="16.500" class="svgrt">A1</text></svg></div>
      <div class="c"><svg class="i"><use href="#n10"/></svg></div>
      <div class="c"><svg class="i" viewBox="0 0 20 20"><path d="M1 1h18v18H1z" fill="#fff" stroke="#2b5799" stroke-width="1.300"/><text x="4" y="15" class="svgB2">A</text></svg></div>
    </div>
    <div class="lab">注释</div>
  </div>
  <div class="grp g-ins">
    <div class="ins-cells">
      <svg class="i" viewBox="0 0 20 20"><text x="2" y="16" class="svgT">T</text></svg>
      <svg class="i"><use href="#pic"/></svg>
    </div>
    <div class="lab">插入</div>
  </div>
</section>

<main class="mid">
  <div class="work">
    <div class="docbar">
      <div class="doctab">
        <svg class="docicon"><use href="#part"/></svg>
        <span class="docname">零件1</span>
        <span class="docx">✕</span>
      </div>
      <div class="docnav">
        <i class="nav-l"></i><i class="nav-r"></i><i class="nav-d"></i><span class="nav-x">✕</span>
      </div>
    </div>
    <div class="frame">
      <div class="view">
        <svg class="scene" viewBox="4 214 1878 781" xmlns="http://www.w3.org/2000/svg">
          <defs>
            <linearGradient id="shaft" x1="0" x2="1" y1="0" y2="0"><stop offset="0" stop-color="#8d8d8d"/><stop offset=".45" stop-color="#dedede"/><stop offset="1" stop-color="#9a9a9a"/></linearGradient>
            <linearGradient id="tip" x1="0" x2="1" y1="0" y2="0"><stop offset="0" stop-color="#bdbdbd"/><stop offset=".5" stop-color="#f0f0f0"/><stop offset="1" stop-color="#c9c9c9"/></linearGradient>
            <radialGradient id="ball" cx=".45" cy=".3" r=".7"><stop offset="0" stop-color="#7d95ea"/><stop offset="1" stop-color="#2f4cc2"/></radialGradient>
          </defs>
          <polygon points="362,509 669,485 738,667 433,693" fill="#e4f6fd" stroke="#1f6fae" stroke-width="2"/>
          <polygon points="746,408 1117,377 1189,563 818,594" fill="#00f13b" stroke="#0b8c70" stroke-width=".6"/>
          <path d="M1025 492h10v48h-10z" fill="#5fe687" opacity=".85"/>
          <path d="M1021 544l7 22 8-22z" fill="#5ae47f"/>
          <ellipse cx="1029" cy="543" rx="8" ry="4.500" fill="#7de898" stroke="#a9eeba" stroke-width="1.500"/>
          <ellipse cx="1029" cy="543" rx="3.500" ry="2" fill="#4fd577"/>
          <path d="M1026 423h9v54h-9z" fill="url(#shaft)"/>
          <path d="M1031 398l-9 25q9 3 19 0z" fill="url(#tip)"/>
          <path d="M1026 424h9" stroke="#fff" stroke-width="1.200"/>
          <ellipse cx="1030" cy="486" rx="11" ry="11" fill="#35c867" opacity=".75"/>
          <ellipse cx="1030" cy="481" rx="12" ry="9.500" fill="url(#ball)"/>
          <rect x="983" y="392" width="146" height="205" rx="3" fill="none" stroke="#f21f1c" stroke-width="3.600"/>
          <path d="M581 592v-30" stroke="#0c9a1c" stroke-width="4"/>
          <path d="M582 542l-5 22h10z" fill="#0c9a1c"/>
          <path d="M581 592l55-5" stroke="#d31414" stroke-width="3"/>
          <path d="M640 587l-26-5 1 10z" fill="#d31414"/>
          <path d="M581 592l9 22" stroke="#0e16c8" stroke-width="3.500"/>
          <path d="M593 620l-9-16 2 12z" fill="#0e16c8"/>
          <circle cx="581" cy="592" r="6" fill="#f1e21e" stroke="#7d7a12" stroke-width=".5"/>
          <text x="582" y="534" class="ax ax-y">Y</text>
          <text x="650" y="591" class="ax ax-x">X</text>
          <text x="593" y="631" class="ax ax-z">Z</text>
          <path d="M1767 877l58-4 17 26-67 4z" fill="#f8f8f8" stroke="#bdbdbd"/>
          <path d="M1775 903l67-4-4 55-62 7z" fill="#f2f2f2" stroke="#bdbdbd"/>
          <path d="M1767 877l8 26 1 58-6-14z" fill="#fafafa" stroke="#c8c8c8"/>
          <text x="0" y="0" class="cube-b" transform="translate(1802 883) rotate(176)">BACK</text>
          <path d="M1802 915v-28" stroke="#7fe58a" stroke-width="2"/>
          <path d="M1802 915l26-3" stroke="#ef6a6a" stroke-width="2"/>
          <path d="M1832 912l-9-3v6z" fill="#ef6a6a"/>
          <path d="M1802 915l7 17" stroke="#7878d8" stroke-width="2"/>
          <circle cx="1802" cy="915" r="3" fill="#e4c91e" stroke="#6f6a22" stroke-width=".6"/>
          <text x="1808" y="935" class="cube-t" transform="rotate(-4 1808 935)">TOP</text>
        </svg>

        <aside class="tree">
          <div class="tree-head"><span class="grip"></span></div>
          <div class="row r0">
            <span class="box">
              <svg class="ti"><use href="#tr1"/></svg><svg class="ti gap"><use href="#tr2"/></svg><span class="tx">零件1</span>
            </span>
          </div>
          <div class="row r1">
            <i class="tchk on"></i>
            <span class="box"><svg class="ti"><use href="#tr3"/></svg><span class="tx lat">Base</span></span>
          </div>
          <div class="row r2">
            <span class="box"><svg class="ti"><use href="#tr4"/></svg><span class="tx">材料 (无)</span></span>
          </div>
          <div class="row r3">
            <i class="exp">+</i><i class="tchk"></i>
            <span class="box"><svg class="ti"><use href="#tr5"/></svg><span class="tx grey">基本参考平面</span></span>
          </div>
          <div class="row r3">
            <i class="exp">−</i>
            <span class="sync"><svg class="ti"><use href="#qs"/></svg><strong>快速建模</strong><i class="sync-arr"></i></span>
          </div>
          <div class="row r5">
            <i class="exp">+</i><i class="tchk on"></i>
            <span class="box"><svg class="ti"><use href="#tr6"/></svg><strong class="tx">草图</strong></span>
          </div>
        </aside>

        <div class="cmdbar">
          <span class="tb t-big"><span class="tm"><svg class="t-ic1"><use href="#t1"/></svg></span><span class="ta"><b class="arr blk"></b></span></span>
          <span class="tb t-or"><span class="tm"><svg class="t-ic"><use href="#t2"/></svg></span><span class="ta"><b class="arr blk"></b></span></span>
          <span class="tb t-bl"><span class="tm"><svg class="t-ic"><use href="#t3"/></svg></span></span>
          <span class="tb t-gr"><span class="tm"><svg class="t-ic"><use href="#t4"/></svg></span><span class="ta"><b class="arr blk"></b></span></span>
          <span class="tb t-gr"><span class="tm"><svg class="t-ic"><use href="#t5"/></svg></span><span class="ta"><b class="arr blk"></b></span></span>
          <span class="tb t-gr"><span class="tm"><svg class="t-ic"><use href="#t6"/></svg></span></span>
          <span class="tb t-gr t-wide"><span class="tm"><svg class="t-ic"><use href="#t7"/></svg></span><span class="ta"><b class="arr blk"></b></span></span>
          <span class="tb t-or"><span class="tm"><svg class="t-ic"><use href="#t8"/></svg></span><span class="ta"><b class="arr blk"></b></span></span>
          <span class="tb t-or"><span class="tm"><svg class="t-ic"><use href="#t9"/></svg></span><span class="ta"><b class="arr blk"></b></span></span>
        </div>
        <svg class="f3" viewBox="0 0 32 50"><path d="M.5.5h31v49H.5z" fill="#fff" stroke="#40709f"/><path d="M2 2h28v28H2z" fill="#e8edf2"/><path d="M2 30h28v18H2z" fill="#4f7ba8"/><path d="M13 13V9c0-5 11-5 11 0v4" fill="none" stroke="#3c6a98" stroke-width="2.500"/><path d="M11 13h15v14H11z" fill="#3c6a98"/><path d="M17.500 17h2v6h-2z" fill="#fff"/><path d="M3 26h5v3H3z" fill="#4f7ba8"/><text x="7" y="45" class="svgf3">F3</text></svg>
      </div>
    </div>
  </div>
  <aside class="side">
    <div class="stab st1">
      <svg class="si" viewBox="0 0 24 24"><circle cx="12" cy="12" r="11" fill="#2b5fb0" stroke="#153a75"/><text x="7" y="19" class="svgh">?</text></svg>
      <span class="vt">学习 浩辰3D 2020</span>
    </div>
    <div class="stab st2">
      <svg class="si"><use href="#layers"/></svg>
      <span class="vt">图层</span>
    </div>
    <div class="side-ic">
      <svg class="si"><use href="#gauge"/></svg>
      <svg class="si"><use href="#video"/></svg>
      <svg class="si"><use href="#heat"/></svg>
      <svg class="si"><use href="#key"/></svg>
    </div>
  </aside>
</main>

<footer class="status">
  <div class="st-msg">重新定位手柄到平面或线性特征,或者重新定位手柄到圆柱、边或线以创建旋转特征。</div>
  <div class="st-sel">选择了 1 项</div>
  <div class="st-blank"></div>
  <div class="st-input">查找命令</div>
  <div class="st-icons">
    <svg class="i"><use href="#next"/></svg>
    <svg class="i"><use href="#s1"/></svg>
    <svg class="i"><use href="#s2"/></svg>
    <svg class="i"><use href="#s3"/></svg>
    <svg class="i"><use href="#s4"/></svg>
    <svg class="i"><use href="#s5"/></svg>
    <svg class="i"><use href="#s6"/></svg>
    <svg class="i"><use href="#s7"/></svg>
    <svg class="i"><use href="#s8"/></svg>
  </div>
  <i class="st-sep"></i>
  <svg class="zb first"><use href="#zm"/></svg>
  <div class="slider"><i class="thumb"></i></div>
  <svg class="zb"><use href="#zp"/></svg>
  <i class="st-sep m"></i>
  <svg class="zb"><use href="#rec"/></svg>
  <i class="st-sep m2"></i>
  <svg class="zb"><use href="#upg"/></svg>
  <div class="wm"><span class="wm-a">晓东CAD</span><span class="wm-b">www.dcad.net</span></div>
</footer>
</body>
</html>
```

FILE: styles.css
```css
* { box-sizing: border-box; }
html, body { margin: 0; padding: 0; }
body {
  width: 1920px;
  height: 1029px;
  overflow: hidden;
  display: flex;
  flex-direction: column;
  font-family: "Liberation Sans", "Noto Sans CJK SC", sans-serif;
  font-size: 14px;
  color: #111;
  background: #707070;
}
.sprite { display: block; width: 0; height: 0; flex: none; }
.i { width: 20px; height: 20px; display: block; flex: none; overflow: visible; }
i, b { font-style: normal; }

.svgxy { font: bold 11px "Liberation Sans", sans-serif; fill: #2d4f92; }
.svgs { font: 7px "Liberation Sans", sans-serif; fill: #1f3d70; }
.svgb { font: italic bold 13px "Liberation Serif", serif; fill: #2b5799; }
.svgB { font: bold 16px "Liberation Serif", serif; fill: #1f4a86; }
.svgB2 { font: bold 16px "Liberation Serif", serif; fill: #111; }
.svgm { font: bold 14px "Liberation Serif", serif; fill: #1f4a86; }
.svgr { font: bold 14px "Liberation Sans", sans-serif; fill: #d81f1f; }
.svgt { font: bold 9px "Liberation Sans", sans-serif; fill: #222; }
.svgrt { font: bold 7px "Liberation Sans", sans-serif; fill: #d81f1f; }
.svgT { font: 17px "Liberation Serif", serif; fill: #cfe2f5; stroke: #2b6fc4; stroke-width: .8; }
.svgh { font: bold 19px "Liberation Sans", sans-serif; fill: #fff; }
.svgf3 { font: bold 15px "Liberation Sans", sans-serif; fill: #fff; }

/* header */
.head {
  flex: none;
  height: 62px;
  position: relative;
  background: linear-gradient(#767676, #6e6e6e);
  color: #e3e3e3;
}
.logo {
  position: absolute;
  left: 10px;
  top: 9px;
  width: 38px;
  height: 38px;
  border-radius: 5px;
  background: #fff;
  border: 1px solid #1c71c9;
}
.logo-svg { width: 100%; height: 100%; display: block; }
.title-row { height: 35px; display: flex; align-items: flex-start; }
.qat {
  width: 835px;
  flex: none;
  padding: 6px 0 0 93px;
  display: flex;
  align-items: center;
  gap: 8px;
}
.qat .tight { margin-left: -3px; }
.vsep { width: 1.500px; height: 22px; background: #e8e8e8; flex: none; }
.arr {
  display: block;
  flex: none;
  width: 0;
  height: 0;
  border-left: 4px solid transparent;
  border-right: 4px solid transparent;
  border-top: 5px solid #555;
}
.arr.dim { border-top-color: #5a5a5a; }
.arr.blk { border-top-color: #000; border-left-width: 3.500px; border-right-width: 3.500px; }
.qat-more {
  margin-left: 11px;
  width: 10px;
  height: 9px;
  border-top: 2px solid #111;
  position: relative;
}
.qat-more::after {
  content: "";
  position: absolute;
  left: 0;
  top: 2px;
  border-left: 5px solid transparent;
  border-right: 5px solid transparent;
  border-top: 6px solid #111;
}
.title { padding-top: 7px; font-size: 15px; letter-spacing: .4px; line-height: 20px; color: #d9d9d9; white-space: nowrap; }
.win {
  margin-left: auto;
  padding: 5px 7px 0 0;
  display: flex;
  gap: 14px;
  align-items: center;
}
.w-min { width: 14px; height: 14px; position: relative; }
.w-min::after { content: ""; position: absolute; left: 0; top: 5px; width: 14px; height: 5px; background: #dcdcdc; border: 1px solid #999; }
.w-res { width: 14px; height: 14px; border: 2px solid #d8d8d8; border-left-width: 1px; position: relative; }
.w-res::after { content: ""; position: absolute; left: -2px; top: 4px; width: 8px; height: 8px; background: #6f6f6f; border: 2px solid #d8d8d8; }
.w-x { width: 14px; height: 14px; font-size: 14px; line-height: 14px; font-weight: bold; color: #e6e6e6; text-align: center; }

.tab-row { height: 27px; display: flex; align-items: stretch; }
.tabs { display: flex; padding-left: 93.500px; font-family: "Liberation Mono", "Noto Sans CJK SC", monospace; font-size: 14px; letter-spacing: .75px; white-space: nowrap; }
.tab { padding: 0 17.700px; line-height: 28px; color: #e6e6e6; }
.tab.active {
  background: linear-gradient(#e4e4e4, #c9c9c9);
  color: #0f0f0f;
  border-radius: 3px 3px 0 0;
}
.sub-win { margin-left: auto; display: flex; align-items: center; padding: 0 3px 1px 0; gap: 0; }
.hs { width: 14px; height: 16px; margin-right: 16px; display: block; }
.q-help { width: 13px; height: 15px; background: #8d8d8d; color: #d4d4d4; font-weight: bold; font-size: 13px; line-height: 15px; text-align: center; margin-right: 12px; border-radius: 1px; }
.sw-min { width: 8px; height: 2px; background: #e4e4e4; margin: 8px 14px 0 0; }
.sw-res { width: 10px; height: 10px; border: 1px solid #e4e4e4; border-top-width: 2px; margin-right: 10px; }
.sw-x { width: 13px; font-size: 13px; line-height: 14px; color: #e8e8e8; font-weight: bold; text-align: center; }

/* ribbon */
.ribbon {
  flex: none;
  height: 113px;
  display: flex;
  background: linear-gradient(#cbcbcb, #b8b8b8 45%, #a2a2a2);
  border-top: 1px solid #3d3d3d;
  border-bottom: 1px solid #4d4d4d;
}
.grp { display: flex; flex-direction: column; flex: none; height: 111px; border-right: 1px solid #7d7d7d; padding-top: 4px; margin-bottom: 1px; }
.cells { display: grid; grid-auto-flow: column; grid-template-rows: repeat(3, 30px); height: 90px; }
.c { display: flex; align-items: center; justify-content: center; min-width: 0; }
.c.l { justify-content: flex-start; }
.lab { height: 14px; line-height: 13px; margin-top: 0; text-align: center; font-size: 14px; letter-spacing: .7px; color: #1d1d1d; }
.isep { grid-row: 1 / -1; width: 2px; height: 80px; margin-top: 5px; justify-self: center; background: #f3f3f3; display: block; }
.on {
  width: 28px;
  height: 29px;
  display: flex;
  align-items: center;
  justify-content: center;
  border: 1px solid #c9a35c;
  border-radius: 3px;
  background: linear-gradient(#fff2bb, #ffd671);
}

.g-sel { width: 94px; }
.g-sel .cells { padding-left: 6px; grid-template-columns: 54px 28px; }
.bigsel {
  grid-row: 1 / -1;
  margin-top: 2px;
  height: 87px;
  border: 1px solid #c9a35c;
  border-radius: 3px;
  display: flex;
  flex-direction: column;
  background: #ffd671;
}
.bigsel-top { height: 49px; display: flex; justify-content: center; padding-top: 4px; background: linear-gradient(#fff2bb, #ffd96e); border-bottom: 1px solid #c9a35c; }
.cursor { width: 20px; height: 28px; margin-left: 3px; display: block; }
.bigsel-bot { flex: 1; display: flex; flex-direction: column; align-items: center; background: linear-gradient(#ffe79c, #ffd671); color: #111; }
.bigsel-bot span { line-height: 20px; margin-top: 6px; letter-spacing: .7px; }
.bigsel-bot .arr { margin-top: 1px; border-left-width: 3px; border-right-width: 3px; border-top-width: 4px; }

.g-pla { width: 50px; }
.g-pla .cells { padding-left: 12px; grid-template-columns: 38px; }

.g-drw { width: 344px; }
.g-drw .cells { padding-left: 8px; grid-template-columns: repeat(4, 43.400px) 3px 30.400px 30px 29px 8px 28px 28px; }
.g-drw .c.l .arr { margin-left: 10px; }

.g-rel { width: 165px; }
.g-rel .cells { padding-left: 7.500px; grid-template-columns: repeat(4, 29px) 9px 26px; }

.g-sma { width: 242px; }
.g-sma .cells { padding-left: 10px; grid-template-columns: repeat(4, 48px) 4px 34px; }
.chk { width: 13px; height: 13px; margin-right: .5px; display: block; flex: none; border: 1px solid #7c7c7c; background: linear-gradient(#f4f4f4, #dadada); position: relative; }
.chk.on::after {
  content: "";
  position: absolute;
  left: 3.500px;
  top: 1px;
  width: 4px;
  height: 8px;
  border: solid #555;
  border-width: 0 1.500px 1.500px 0;
  transform: rotate(40deg);
}

.g-dim { width: 215px; }
.g-dim .cells { padding-left: 4px; grid-template-columns: 70px 42px 28px 32px 4px 30px; }
.bigdim { grid-row: 1 / -1; display: flex; flex-direction: column; align-items: center; }
.smart { width: 40px; height: 36px; display: block; margin-top: 5px; }
.bigdim span { margin-top: 15px; line-height: 20px; font-size: 14px; letter-spacing: .8px; color: #111; white-space: nowrap; }
.g-dim .c.l { padding-left: 3px; }
.g-dim .c.l .arr { margin-left: 7px; }

.g-not { width: 129px; }
.g-not .cells { padding-left: 7.500px; grid-template-columns: repeat(4, 29px); }

.g-ins { width: 40px; }
.ins-cells { height: 90px; padding-top: 15px; display: flex; flex-direction: column; align-items: center; gap: 17px; }

/* middle */
.mid { flex: 1; display: flex; min-height: 0; }
.work { width: 1888px; flex: none; display: flex; flex-direction: column; }
.docbar { flex: none; height: 34px; display: flex; align-items: flex-end; background: #707070; }
.doctab {
  margin-left: 5px;
  width: 96px;
  height: 28px;
  display: flex;
  align-items: center;
  padding-left: 8px;
  background: linear-gradient(#dcdcdc, #c4c4c4);
  border-radius: 3px 3px 0 0;
}
.docicon { width: 22px; height: 22px; display: block; flex: none; }
.docname { font-size: 14px; margin-left: 2px; width: 50px; letter-spacing: .6px; }
.docx { font-weight: bold; font-size: 14px; color: #111; }
.docnav { margin-left: auto; padding: 0 4px 10px 0; display: flex; align-items: center; }
.nav-l { width: 0; height: 0; border: 5px solid transparent; border-right: 5px solid #cfcfcf; border-left-width: 0; margin-right: 14px; }
.nav-r { width: 0; height: 0; border: 5px solid transparent; border-left: 5px solid #cfcfcf; border-right-width: 0; margin-right: 10px; }
.nav-d { width: 0; height: 0; border: 5px solid transparent; border-top: 6px solid #e0e0e0; border-bottom-width: 0; margin-right: 8px; }
.nav-x { color: #ececec; font-weight: bold; font-size: 18px; line-height: 18px; }

.frame {
  flex: 1;
  display: flex;
  min-height: 0;
  padding: 4px 5px 7px 4px;
  border-top: 1px solid #3a3a3a;
  border-right: 1px solid #3a3a3a;
  border-bottom: 2px solid #4a4a4a;
  background: #b5b5b5;
}
.view { position: relative; flex: 1; background: #fff; overflow: hidden; }
.scene { position: absolute; left: 0; top: 0; width: 100%; height: 100%; display: block; }
.ax { font: 14px "Liberation Sans", sans-serif; text-anchor: middle; }
.ax-y { fill: #2fd24a; }
.ax-x { fill: #d42020; }
.ax-z { fill: #1420c8; }
.cube-t { font: 12px "Liberation Serif", serif; fill: #555; text-anchor: middle; }
.cube-b { font: 9px "Liberation Serif", serif; fill: #555; text-anchor: middle; }

/* tree */
.tree { position: relative; width: 316px; padding-left: 3px; }
.tree-head {
  height: 10px;
  display: flex;
  justify-content: center;
  align-items: center;
  background: linear-gradient(#e6e6e6, #bcbcbc);
  border: 1px solid #b0b0b0;
  margin-bottom: 5px;
}
.grip { width: 38px; height: 2px; background: repeating-linear-gradient(90deg, #555 0 1px, transparent 1px 3px); }
.row { height: 19.800px; display: flex; align-items: center; white-space: nowrap; margin-left: -3px; }
.r0 { padding-left: 8px; }
.r1 { padding-left: 44px; }
.r2 { padding-left: 66px; }
.r3 { padding-left: 22px; }
.r5 { padding-left: 52px; }
.box {
  height: 17px;
  display: inline-flex;
  align-items: center;
  padding: 0 5px 0 2px;
  background: linear-gradient(#f3f7fa, #e6eff5);
  border: 1px solid #a6c0d4;
}
.ti { width: 15px; height: 15px; display: block; flex: none; }
.ti.gap { margin-left: 7px; }
.tx { font-size: 15px; margin-left: 7px; line-height: 15px; color: #111; }
.tx.lat { font-size: 14px; letter-spacing: .3px; }
.tx.grey { color: #7b7b7b; letter-spacing: .8px; margin-left: 7px; }
strong.tx { font-size: 16px; }
.tchk {
  width: 14px;
  height: 14px;
  display: block;
  flex: none;
  background: #fff;
  border: 1.500px solid #2e4660;
  position: relative;
  margin-right: 9px;
}
.tchk.on { background: linear-gradient(#fff, #dde7f0); }
.tchk.on::after {
  content: "";
  position: absolute;
  left: 3px;
  top: 0;
  width: 5px;
  height: 9px;
  border: solid #101a40;
  border-width: 0 2.200px 2.200px 0;
  transform: rotate(35deg);
}
.exp {
  width: 11px;
  height: 11px;
  flex: none;
  margin-right: 10px;
  border: 1px solid #9a9a9a;
  background: #f2f2f2;
  font-size: 11px;
  line-height: 9px;
  text-align: center;
  color: #111;
}
.sync {
  width: 227px;
  height: 18px;
  display: flex;
  align-items: center;
  padding-left: 9px;
  background: linear-gradient(#ffd983, #f9ae2b 55%, #ffc860);
  position: relative;
}
.sync strong { font-size: 16px; line-height: 16px; color: #111; margin-left: 0; letter-spacing: 1px; }
.sync-arr {
  position: absolute;
  left: 194px;
  top: 3px;
  border-top: 6px solid transparent;
  border-bottom: 6px solid transparent;
  border-right: 21px solid #fff;
}

/* command bar */
.cmdbar {
  position: absolute;
  left: 315px;
  top: 0;
  width: 521px;
  height: 51px;
  display: flex;
  align-items: center;
  padding-left: 3px;
  gap: 5.800px;
  background: linear-gradient(#d5d8dc, #b9bcc1);
  border: 1px solid #4e5c6e;
  border-radius: 2px;
}
.tb { display: flex; height: 34px; border: 1px solid #b3bbc4; border-radius: 3px; overflow: hidden; background: #eef2f6; flex: none; width: 48px; }
.tm { flex: 1; display: flex; align-items: center; justify-content: center; }
.ta { width: 12px; display: flex; align-items: center; justify-content: center; background: linear-gradient(#e7eef6, #cfd9e4); flex: none; }
.t-big { width: 65px; height: 40px; }
.t-big .tm { background: linear-gradient(#ffd9ac, #ff9f45); }
.t-big .ta { width: 14px; }
.t-or .tm { background: linear-gradient(#ffe6b3, #ffc878); }
.t-bl .tm { background: linear-gradient(#eaf3fa, #d8e8f4); }
.t-gr { background: #e6e6e6; }
.t-gr .tm { background: linear-gradient(#ececec, #d7d7d7); }
.t-gr .ta { background: linear-gradient(#f0f0f0, #dedede); }
.t-wide { width: 63px; }
.t-ic { width: 28px; height: 26px; display: block; }
.t-ic1 { width: 36px; height: 32px; display: block; }
.f3 { position: absolute; left: 1837px; top: 100px; width: 32px; height: 50px; display: block; }

/* sidebar */
.side { flex: 1; padding-top: 10px; display: flex; flex-direction: column; background: #707070; }
.stab {
  margin-left: 2px;
  display: flex;
  flex-direction: column;
  align-items: center;
  background: linear-gradient(90deg, #dfdfdf, #cfcfcf);
  border-radius: 3px 0 0 3px;
  padding-top: 6px;
}
.st1 { height: 162px; margin-bottom: 18px; }
.st2 { height: 113px; }
.si { width: 24px; height: 24px; display: block; flex: none; }
.vt { writing-mode: vertical-rl; font-size: 14px; letter-spacing: .7px; line-height: 16px; color: #111; margin-top: 3px; white-space: nowrap; }
.st2 .vt { margin-top: 4px; letter-spacing: 0; }
.side-ic { margin-top: 8px; display: flex; flex-direction: column; align-items: center; gap: 17px; padding-left: 2px; }

/* status */
.status {
  flex: none;
  height: 25px;
  display: flex;
  align-items: center;
  position: relative;
  background: linear-gradient(#4d4d4d, #2f2f2f);
  color: #e8e8e8;
}
.st-msg { width: 876px; height: 100%; line-height: 26px; text-align: center; letter-spacing: .85px; white-space: nowrap; border-right: 1px solid #e8e8e8; flex: none; }
.st-sel { width: 334px; height: 100%; line-height: 26px; text-align: center; letter-spacing: .5px; border-right: 1px solid #e8e8e8; flex: none; }
.st-blank { width: 25px; height: 100%; flex: none; border-right: 1px solid #e8e8e8; }
.st-input { width: 177px; height: 100%; flex: none; padding-left: 3px; background: #fff; color: #9a9a9a; line-height: 26px; letter-spacing: .7px; }
.st-icons { display: flex; gap: 8.500px; padding-left: 3px; flex: none; align-items: center; }
.st-sep { width: 1px; height: 100%; background: #e8e8e8; margin-left: 4px; flex: none; }
.st-sep.m { margin-left: 4px; margin-right: 4px; }
.st-sep.m2 { margin-left: 6px; margin-right: 7px; }
.zb { width: 18px; height: 18px; display: block; flex: none; }
.zb.first { margin-left: 2px; }
.slider { width: 144px; height: 1px; background: #eee; margin-left: 5px; position: relative; flex: none; }
.thumb {
  position: absolute;
  left: 25px;
  top: -9px;
  width: 11px;
  height: 18px;
  background: linear-gradient(#bcd2ea, #6e90b8);
  border: 1px solid #dfe9f3;
  border-radius: 2px 2px 5px 5px;
}
.wm { position: absolute; left: 1802px; top: -20px; display: flex; flex-direction: column; pointer-events: none; }
.wm-a { font: italic bold 20px/20px "Liberation Sans", "Noto Sans CJK SC", sans-serif; color: rgba(190, 190, 190, .55); padding-left: 6px; }
.wm-b { margin-left: 12px; margin-top: 3px; font: 13px/16px "Liberation Sans", sans-serif; color: rgba(240, 240, 240, .6); }
```
